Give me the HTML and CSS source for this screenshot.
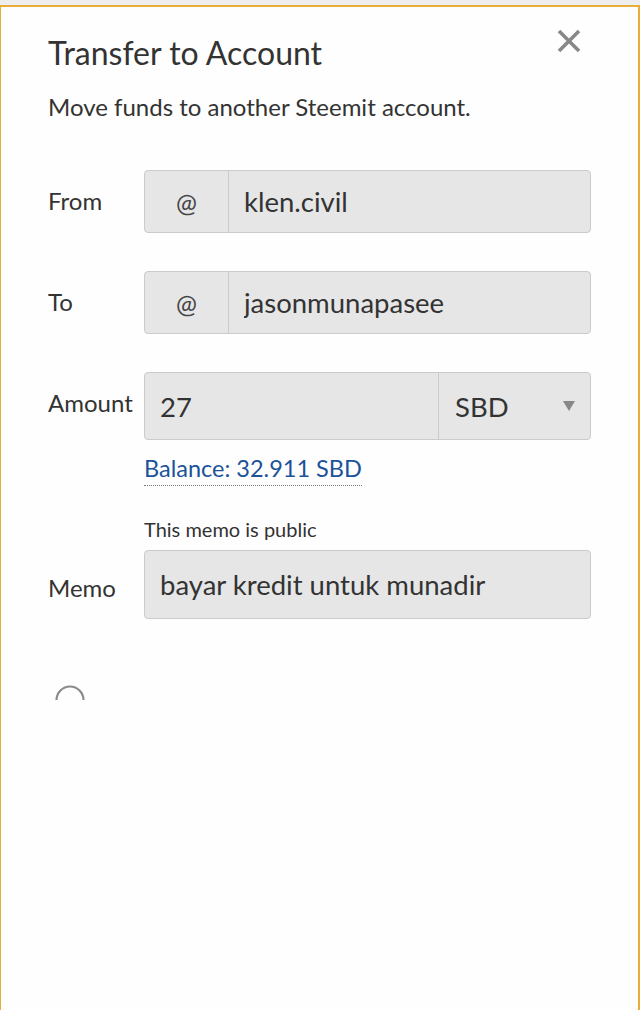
FILE: index.html
```html
<!DOCTYPE html>
<html lang="en">
<head>
    <meta charset="UTF-8">
    <meta name="viewport" content="width=device-width, initial-scale=1.0">
    <title>Transfer to Account</title>
    <link rel="stylesheet" href="styles.css">
</head>
<body>

<div class="modal">
    <button class="close" type="button" aria-label="Close">
        <svg width="24" height="24" viewBox="0 0 24 24">
            <path d="M2 2 L22 22 M22 2 L2 22" stroke="#888" stroke-width="3.6" fill="none"/>
        </svg>
    </button>

    <h1>Transfer to Account</h1>
    <p class="intro">Move funds to another Steemit account.</p>

    <form id="transferForm">
        <div class="row">
            <label for="from">From</label>
            <div class="group">
                <span class="addon">@</span>
                <input type="text" id="from" value="klen.civil">
            </div>
        </div>

        <div class="row">
            <label for="to">To</label>
            <div class="group">
                <span class="addon">@</span>
                <input type="text" id="to" value="jasonmunapasee">
            </div>
        </div>

        <div class="row amount-row">
            <label for="amount">Amount</label>
            <div>
                <div class="group amount">
                    <input type="text" id="amount" value="27">
                    <div class="asset">
                        <span>SBD</span>
                        <span class="caret"></span>
                    </div>
                </div>
                <a class="balance" href="#">Balance: 32.911 SBD</a>
            </div>
        </div>

        <div class="row memo-row">
            <label for="memo">Memo</label>
            <div>
                <small class="hint">This memo is public</small>
                <div class="group memo">
                    <input type="text" id="memo" value="bayar kredit untuk munadir">
                </div>
            </div>
        </div>
    </form>

    <div class="spinner">
        <svg width="32" height="18" viewBox="0 0 32 18">
            <path d="M2.5 16 A13.5 13.5 0 0 1 29.5 16" stroke="#8a8a8a" stroke-width="2.2" fill="none"/>
        </svg>
    </div>
</div>

</body>
</html>
```

FILE: styles.css
```css
html, body {
    height: 100%;
}
body {
    margin: 0;
    padding-top: 5px;
    background-color: #eeeeee;
    font-family: Lato, "Open Sans", sans-serif;
    color: #333;
    box-sizing: border-box;
}
.modal {
    position: relative;
    min-height: 100%;
    box-sizing: border-box;
    background: #fefefe;
    border: 2px solid #e7ae3a;
    border-bottom: none;
    border-left-width: 1px;
    padding: 26px 47px 40px 47px;
}
.close {
    position: absolute;
    top: 22px;
    right: 57px;
    background: none;
    border: none;
    padding: 0;
    cursor: pointer;
}
.close svg {
    display: block;
}
h1 {
    margin: 0;
    font-size: 32px;
    font-weight: 400;
    line-height: 40px;
    color: #333;
}
.intro {
    margin: 19px 0 48px;
    font-size: 24px;
    line-height: 30px;
    color: #333;
}
.row {
    display: grid;
    grid-template-columns: 96px minmax(0, 1fr);
    margin-bottom: 38px;
}
.row label {
    font-size: 24px;
    line-height: 30px;
    padding-top: 16px;
    color: #333;
}
.group {
    display: flex;
    height: 63px;
    box-sizing: border-box;
    border: 1.5px solid #cbcbcb;
    border-radius: 4px;
    background-color: #e6e6e6;
    overflow: hidden;
}
.group.amount {
    height: 68px;
}
.group.memo {
    height: 69px;
}
.addon {
    width: 83px;
    flex: none;
    display: flex;
    align-items: center;
    justify-content: center;
    border-right: 1.5px solid #cbcbcb;
    font-size: 25px;
    color: #444;
}
.group input {
    flex: 1;
    width: 0;
    min-width: 0;
    border: none;
    background: transparent;
    font-family: inherit;
    font-size: 27.5px;
    color: #333;
    padding: 0 15px;
    outline: none;
}
.asset {
    width: 152px;
    flex: none;
    display: flex;
    align-items: center;
    justify-content: space-between;
    border-left: 1.5px solid #cbcbcb;
    padding: 0 15px 0 16px;
    box-sizing: border-box;
    font-size: 27.5px;
    color: #333;
}
.caret {
    width: 0;
    height: 0;
    border-left: 6.5px solid transparent;
    border-right: 6.5px solid transparent;
    border-top: 10px solid #888;
}
.balance {
    display: inline-block;
    margin-top: 14px;
    font-size: 23.5px;
    line-height: 28px;
    color: #1b5299;
    text-decoration: none;
    border-bottom: 1.5px dotted #7a7a7a;
    padding-bottom: 3px;
}
.amount-row {
    margin-bottom: 31px;
}
.memo-row {
    margin-bottom: 0;
}
.memo-row label {
    padding-top: 56px;
}
.hint {
    display: block;
    font-size: 20px;
    line-height: 24px;
    margin-bottom: 9px;
    color: #333;
}
.spinner {
    margin-top: 65px;
    margin-left: 6px;
}
.spinner svg {
    display: block;
}
```
